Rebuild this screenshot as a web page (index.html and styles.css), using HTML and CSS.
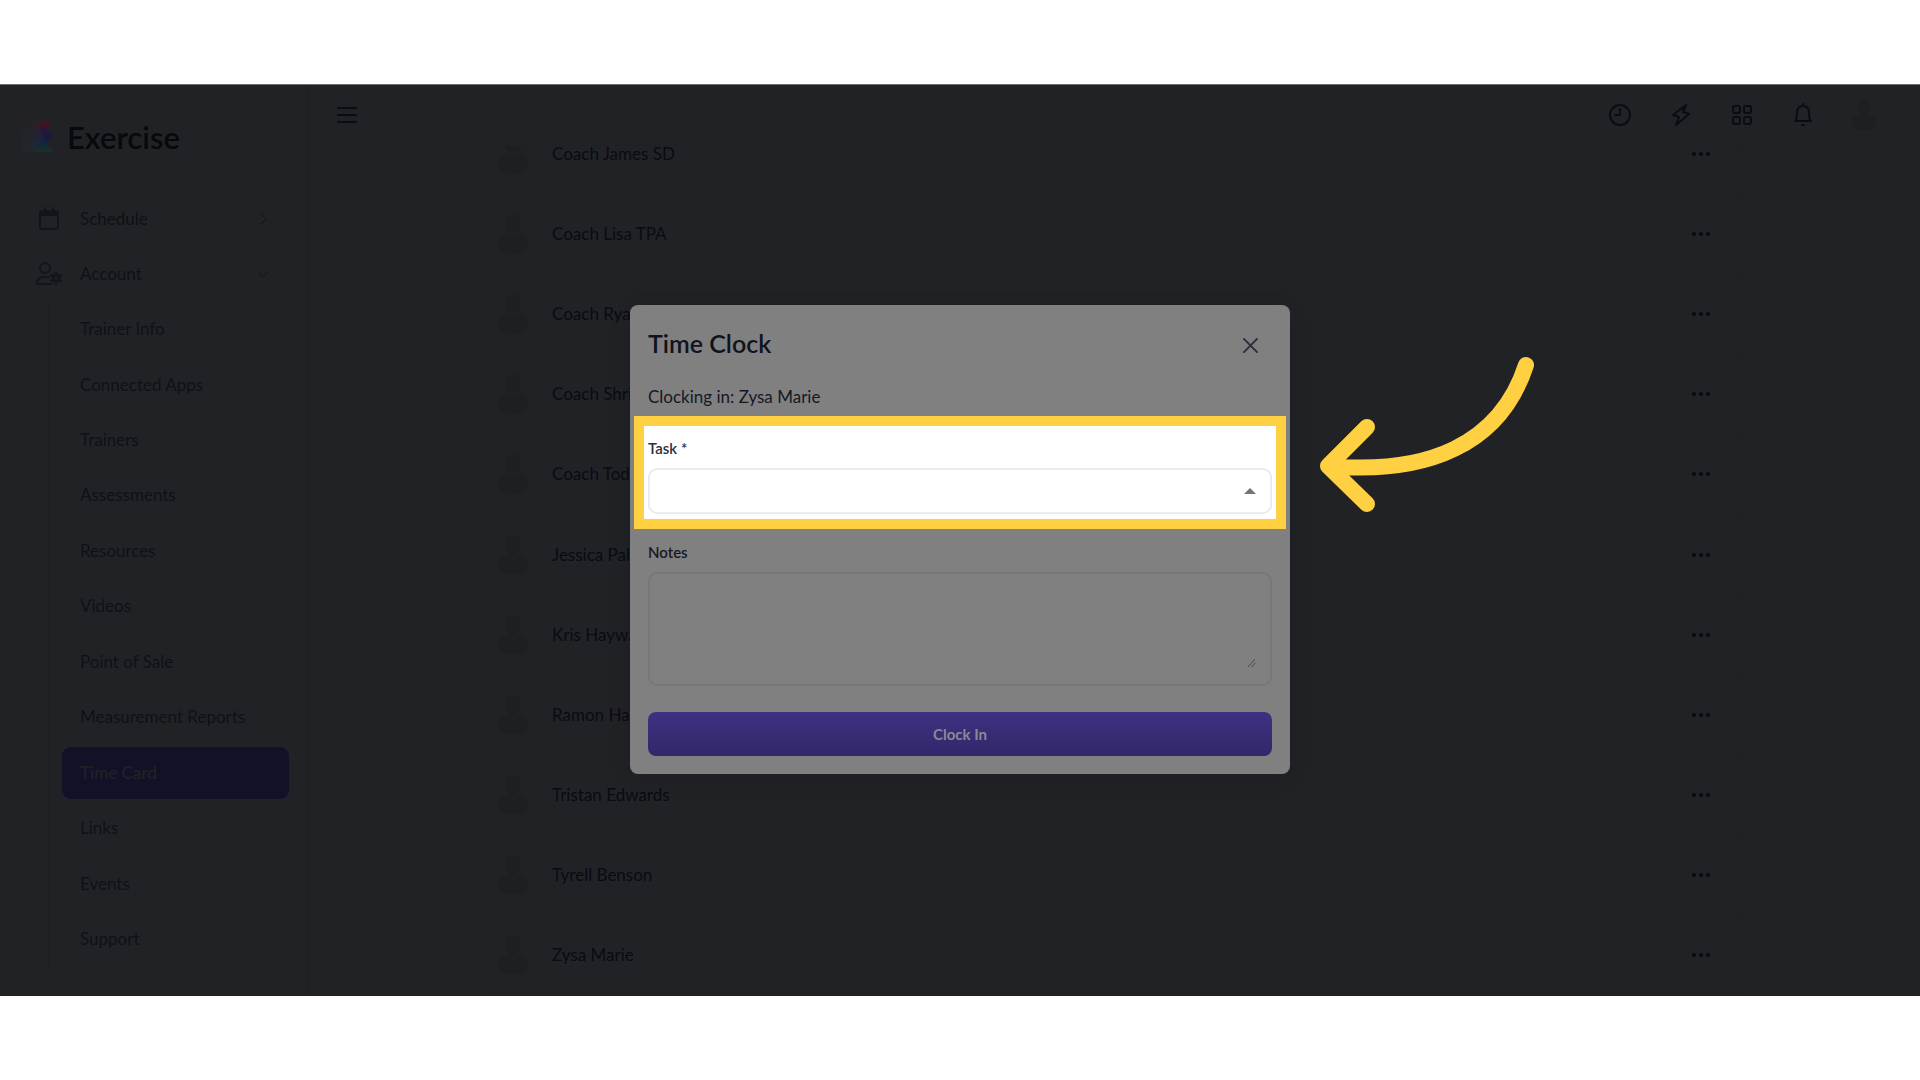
FILE: index.html
```html
<!DOCTYPE html>
<html lang="en">
<head>
    <meta charset="UTF-8">
    <meta name="viewport" content="width=device-width, initial-scale=1.0">
    <title>Exercise - Time Card</title>
    <link rel="stylesheet" href="styles.css">
</head>
<body>
    <svg class="sprite" aria-hidden="true">
        <symbol id="avatar" viewBox="0 0 30 40">
            <ellipse cx="15" cy="10" rx="8" ry="10"/>
            <path d="M8 20.500h14c5 0 8 4 8 9 0 6-4 10-15 10s-15-4-15-10c0-5 3-9 8-9z"/>
        </symbol>
        <symbol id="dots" viewBox="0 0 18 6">
            <circle cx="2" cy="3" r="2"/><circle cx="9" cy="3" r="2"/><circle cx="16" cy="3" r="2"/>
        </symbol>
    </svg>

    <div class="app">
        <aside class="sidebar">
            <a class="brand" href="#">
                <svg class="brand-mark" viewBox="0 0 32 32">
                    <defs>
                        <linearGradient id="strong" x1="0" y1="0" x2="0" y2="1">
                            <stop offset="0.100" stop-color="#43141a"/>
                            <stop offset="0.300" stop-color="#28153f"/>
                            <stop offset="0.550" stop-color="#161844"/>
                            <stop offset="0.750" stop-color="#132740"/>
                            <stop offset="0.950" stop-color="#10352a"/>
                        </linearGradient>
                        <linearGradient id="mid" x1="0" y1="0" x2="0" y2="1">
                            <stop offset="0" stop-color="#301e23"/>
                            <stop offset="0.500" stop-color="#1f2236"/>
                            <stop offset="1" stop-color="#1b2d2e"/>
                        </linearGradient>
                        <linearGradient id="soft" x1="0" y1="0" x2="0" y2="1">
                            <stop offset="0" stop-color="#262125"/>
                            <stop offset="0.500" stop-color="#20242b"/>
                            <stop offset="1" stop-color="#20272a"/>
                        </linearGradient>
                    </defs>
                    <path fill="url(#soft)" d="M4 1H13L8 8L14 16L8 23L13 31H4Q0 31 0 27V5Q0 1 4 1z"/>
                    <path fill="url(#mid)" d="M12 0H21L17 8L23 16L17 23L22 31H13L8 23L14 16L8 8z"/>
                    <path fill="url(#strong)" d="M21 0H31L25 8L31 16L24 23L31 31H22L17 23L23 16L17 8z"/>
                </svg>
                <span>Exercise</span>
            </a>
            <nav class="nav">
                <a class="nav-item" href="#">
                    <svg class="nav-icon" viewBox="0 0 28 24">
                        <rect x="5" y="4" width="18" height="18" rx="2"/>
                        <path d="M10 1v4M18 1v4"/>
                        <path class="solid" d="M5 5h18v3H5z"/>
                    </svg>
                    <span>Schedule</span>
                    <svg class="chevron" viewBox="0 0 12 12"><path d="M4 1l5 5-5 5"/></svg>
                </a>
                <a class="nav-item" href="#">
                    <svg class="nav-icon" viewBox="0 0 28 24">
                        <circle cx="10" cy="6" r="5"/>
                        <path d="M17 22H2c0-5 2-7 6-7h6"/>
                        <circle class="cog" cx="21" cy="16" r="3"/>
                        <path d="M21 10v2M21 20v2M16 13l2 1M24 18l2 1M16 19l2-1M24 14l2-1"/>
                    </svg>
                    <span>Account</span>
                    <svg class="chevron" viewBox="0 0 12 12"><path d="M1 4l5 5 5-5"/></svg>
                </a>
                <div class="subnav">
                    <a href="#">Trainer Info</a>
                    <a href="#">Connected Apps</a>
                    <a href="#">Trainers</a>
                    <a href="#">Assessments</a>
                    <a href="#">Resources</a>
                    <a href="#">Videos</a>
                    <a href="#">Point of Sale</a>
                    <a href="#">Measurement Reports</a>
                    <a class="active" href="#">Time Card</a>
                    <a href="#">Links</a>
                    <a href="#">Events</a>
                    <a href="#">Support</a>
                </div>
            </nav>
        </aside>

        <main class="main">
            <header class="topbar">
                <button class="icon-button menu" aria-label="Menu">
                    <svg viewBox="0 0 24 24"><path d="M3 5h18M3 12h18M3 19h18"/></svg>
                </button>
                <button class="icon-button" aria-label="Time clock">
                    <svg viewBox="0 0 24 24"><circle cx="12" cy="12" r="10"/><path d="M12 6v6H7"/></svg>
                </button>
                <button class="icon-button" aria-label="Quick actions">
                    <svg viewBox="0 0 24 24"><path d="M17 2L4 12l6 2-3 8 13-11-6-2z"/></svg>
                </button>
                <button class="icon-button" aria-label="Apps">
                    <svg viewBox="0 0 24 24"><rect x="3" y="3" width="7" height="7" rx="2"/><rect x="14" y="3" width="7" height="7" rx="2"/><rect x="3" y="14" width="7" height="7" rx="2"/><rect x="14" y="14" width="7" height="7" rx="2"/></svg>
                </button>
                <button class="icon-button" aria-label="Notifications">
                    <svg viewBox="0 0 24 24"><path d="M12 1v2M4 18c2-2 2-4 2-8 0-4 2-7 6-7s6 3 6 7c0 4 0 6 2 8zM11 22h2"/></svg>
                </button>
                <button class="icon-button" aria-label="Profile">
                    <svg class="avatar"><use href="#avatar"/></svg>
                </button>
            </header>
            <ul class="trainers" id="trainers"></ul>
        </main>

        <div class="overlay">
            <form class="modal" role="dialog" aria-labelledby="modalTitle">
                <div class="modal-header">
                    <h2 id="modalTitle">Time Clock</h2>
                    <button class="close" type="button" aria-label="Close">
                        <svg viewBox="0 0 16 16"><path d="M1 1l14 14M15 1L1 15"/></svg>
                    </button>
                </div>
                <p class="clocking">Clocking in: Zysa Marie</p>
                <div class="highlight">
                    <label for="task">Task *</label>
                    <div class="select-wrap">
                        <select id="task" required>
                            <option value="" selected></option>
                        </select>
                        <svg class="caret" viewBox="0 0 12 6"><path d="M6 0l6 6H0z"/></svg>
                    </div>
                </div>
                <label for="notes">Notes</label>
                <div class="notes-box">
                    <textarea id="notes"></textarea>
                    <svg class="grip" viewBox="0 0 8 8"><path d="M0 8l7-8M4 8l3-4"/></svg>
                </div>
                <button class="submit" type="submit">Clock In</button>
            </form>
            <svg class="arrow" viewBox="0 0 260 190" aria-hidden="true">
                <path d="M226 24C200 104 127 134 28 125M67 86L28 125l39 38"/>
            </svg>
        </div>
    </div>

    <script>
        const trainers = [
            'Coach James SD', 'Coach Lisa TPA', 'Coach Ryan', 'Coach Shri', 'Coach Tod',
            'Jessica Pali', 'Kris Haywar', 'Ramon Har', 'Tristan Edwards', 'Tyrell Benson', 'Zysa Marie'
        ];
        const list = document.getElementById('trainers');

        trainers.forEach(name => {
            const row = document.createElement('li');
            row.innerHTML = `
                <svg class="avatar"><use href="#avatar"/></svg>
                <span>${name}</span>
                <button class="more" aria-label="Options"><svg><use href="#dots"/></svg></button>
            `;
            list.appendChild(row);
        });
    </script>
</body>
</html>
```
FILE: styles.css
```css
* {
    box-sizing: border-box;
}
body {
    display: flex;
    flex-direction: column;
    min-height: 100vh;
    margin: 0;
    padding: 84px 0;
    background: #fff;
    font-family: Lato, "Liberation Sans", sans-serif;
    font-size: 17px;
    line-height: 24px;
}
button, select, textarea {
    font: inherit;
}
button {
    padding: 0;
    border: none;
    background: none;
    cursor: pointer;
}
a {
    color: inherit;
    text-decoration: none;
}
svg {
    flex-shrink: 0;
    fill: none;
    stroke-linecap: round;
    stroke-linejoin: round;
}
.sprite {
    position: absolute;
    width: 0;
    height: 0;
}
.app {
    position: relative;
    display: flex;
    flex: 1;
    border-top: 1px solid #6c6d70;
    background: #212226;
    color: #0f1117;
}

/* sidebar */
.sidebar {
    display: flex;
    flex-direction: column;
    width: 308px;
    padding: 32px 18px 29px 22px;
    border-right: 1px solid #1e1f23;
}
.brand {
    display: flex;
    align-items: center;
    gap: 13px;
    height: 40px;
    margin-bottom: 34px;
    color: #08090d;
    font-size: 31px;
    font-weight: 600;
}
.brand-mark {
    width: 32px;
    height: 32px;
}
.nav {
    display: flex;
    flex: 1;
    flex-direction: column;
}
.nav-item {
    display: flex;
    flex: 1;
    align-items: center;
}
.nav-item span {
    flex: 1;
}
.nav-icon {
    width: 28px;
    height: 24px;
    margin: 0 17px 0 13px;
    stroke: #12141e;
    stroke-width: 2;
}
.nav-icon .solid {
    fill: #12141e;
}
.nav-icon .cog {
    stroke-width: 3;
}
.chevron {
    width: 12px;
    height: 12px;
    margin-right: 20px;
    stroke: #121418;
}
.subnav {
    display: flex;
    flex: 12;
    flex-direction: column;
    gap: 4px;
    margin-left: 26px;
    padding: 2px 0 2px 13px;
    border-left: 1px solid #1e1f23;
}
.subnav a {
    display: flex;
    flex: 1;
    align-items: center;
    padding-left: 18px;
    border-radius: 9px;
}
.subnav .active {
    background: #111227;
    color: #212226;
    font-weight: 500;
}

/* main column */
.main {
    display: flex;
    flex: 1;
    flex-direction: column;
}
.topbar {
    display: flex;
    z-index: 1;
    height: 61px;
    padding: 0 26px 1px 8px;
    border-bottom: 1px solid #1f2023;
    background: #212226;
}
.icon-button {
    display: flex;
    align-items: center;
    justify-content: center;
    width: 61px;
}
.icon-button svg {
    width: 24px;
    height: 24px;
    stroke: #0b0c11;
    stroke-width: 2;
}
.icon-button.menu {
    margin-right: auto;
}
.avatar {
    width: 30px;
    height: 40px;
    fill: #1e1f23;
}
.icon-button .avatar {
    width: 24px;
    height: 32px;
    stroke: none;
}
.trainers {
    display: flex;
    flex: 1;
    flex-direction: column;
    width: 78%;
    max-width: 1252px;
    margin: -32px auto 0;
    padding: 0;
    border-right: 1px solid #1f2024;
    list-style: none;
}
.trainers li {
    display: flex;
    flex: 1;
    align-items: center;
    min-height: 60px;
    padding: 0 29px 0 10px;
    border-bottom: 1px solid #1f2024;
    color: #090b13;
}
.trainers span {
    flex: 1;
    padding-left: 24px;
}
.more svg {
    display: block;
    width: 18px;
    height: 6px;
    fill: #090b10;
}

/* dialog */
.overlay {
    position: absolute;
    z-index: 2;
    inset: 0;
    display: flex;
    align-items: center;
    justify-content: center;
    padding-bottom: 2px;
}
.modal {
    width: 660px;
    padding: 18px;
    border-radius: 8px;
    background: #808080;
    box-shadow: 0 4px 20px rgba(0, 0, 0, 0.1);
    color: #151824;
}
.modal-header {
    display: flex;
    align-items: center;
    justify-content: space-between;
    height: 40px;
}
.modal-header h2 {
    margin: 0;
    color: #10131e;
    font-size: 25px;
    font-weight: 600;
}
.close {
    display: flex;
    padding: 18px 14px 14px;
}
.close svg {
    width: 15px;
    height: 15px;
    stroke: #2b2d3b;
    stroke-width: 2;
}
.clocking {
    margin: 22px 0 7px;
}
.modal label {
    display: block;
    margin-bottom: 10px;
    font-size: 15px;
    font-weight: 600;
    line-height: 20px;
}
.highlight {
    margin: 0 -14px 13px;
    padding: 12px 4px 5px;
    border: 10px solid #ffd142;
    background: #fff;
    color: #2b2e42;
}
.select-wrap {
    position: relative;
}
.select-wrap select {
    display: block;
    width: 100%;
    height: 46px;
    padding: 0 16px;
    border: 2px solid #ebecf0;
    border-radius: 9px;
    appearance: none;
    background: #fff;
}
.caret {
    position: absolute;
    top: 20px;
    right: 16px;
    width: 12px;
    height: 6px;
    fill: #757575;
}
.notes-box {
    position: relative;
    height: 114px;
    padding: 16px;
    border: 2px solid #78787a;
    border-radius: 9px;
}
.notes-box textarea {
    display: block;
    width: 100%;
    height: 100%;
    padding: 0;
    border: none;
    outline: none;
    resize: none;
    background: none;
}
.grip {
    position: absolute;
    right: 14px;
    bottom: 17px;
    width: 8px;
    height: 8px;
    stroke: #4a4a4a;
}
.submit {
    display: block;
    width: 100%;
    height: 44px;
    margin-top: 26px;
    border-radius: 8px;
    background: linear-gradient(#3e3182, #32276a);
    color: #8b8894;
    font-size: 15px;
    font-weight: 700;
}
.arrow {
    position: absolute;
    top: calc(50% - 200px);
    left: calc(50% + 340px);
    width: 260px;
    height: 190px;
    stroke: #ffd142;
    stroke-width: 16;
}
```
